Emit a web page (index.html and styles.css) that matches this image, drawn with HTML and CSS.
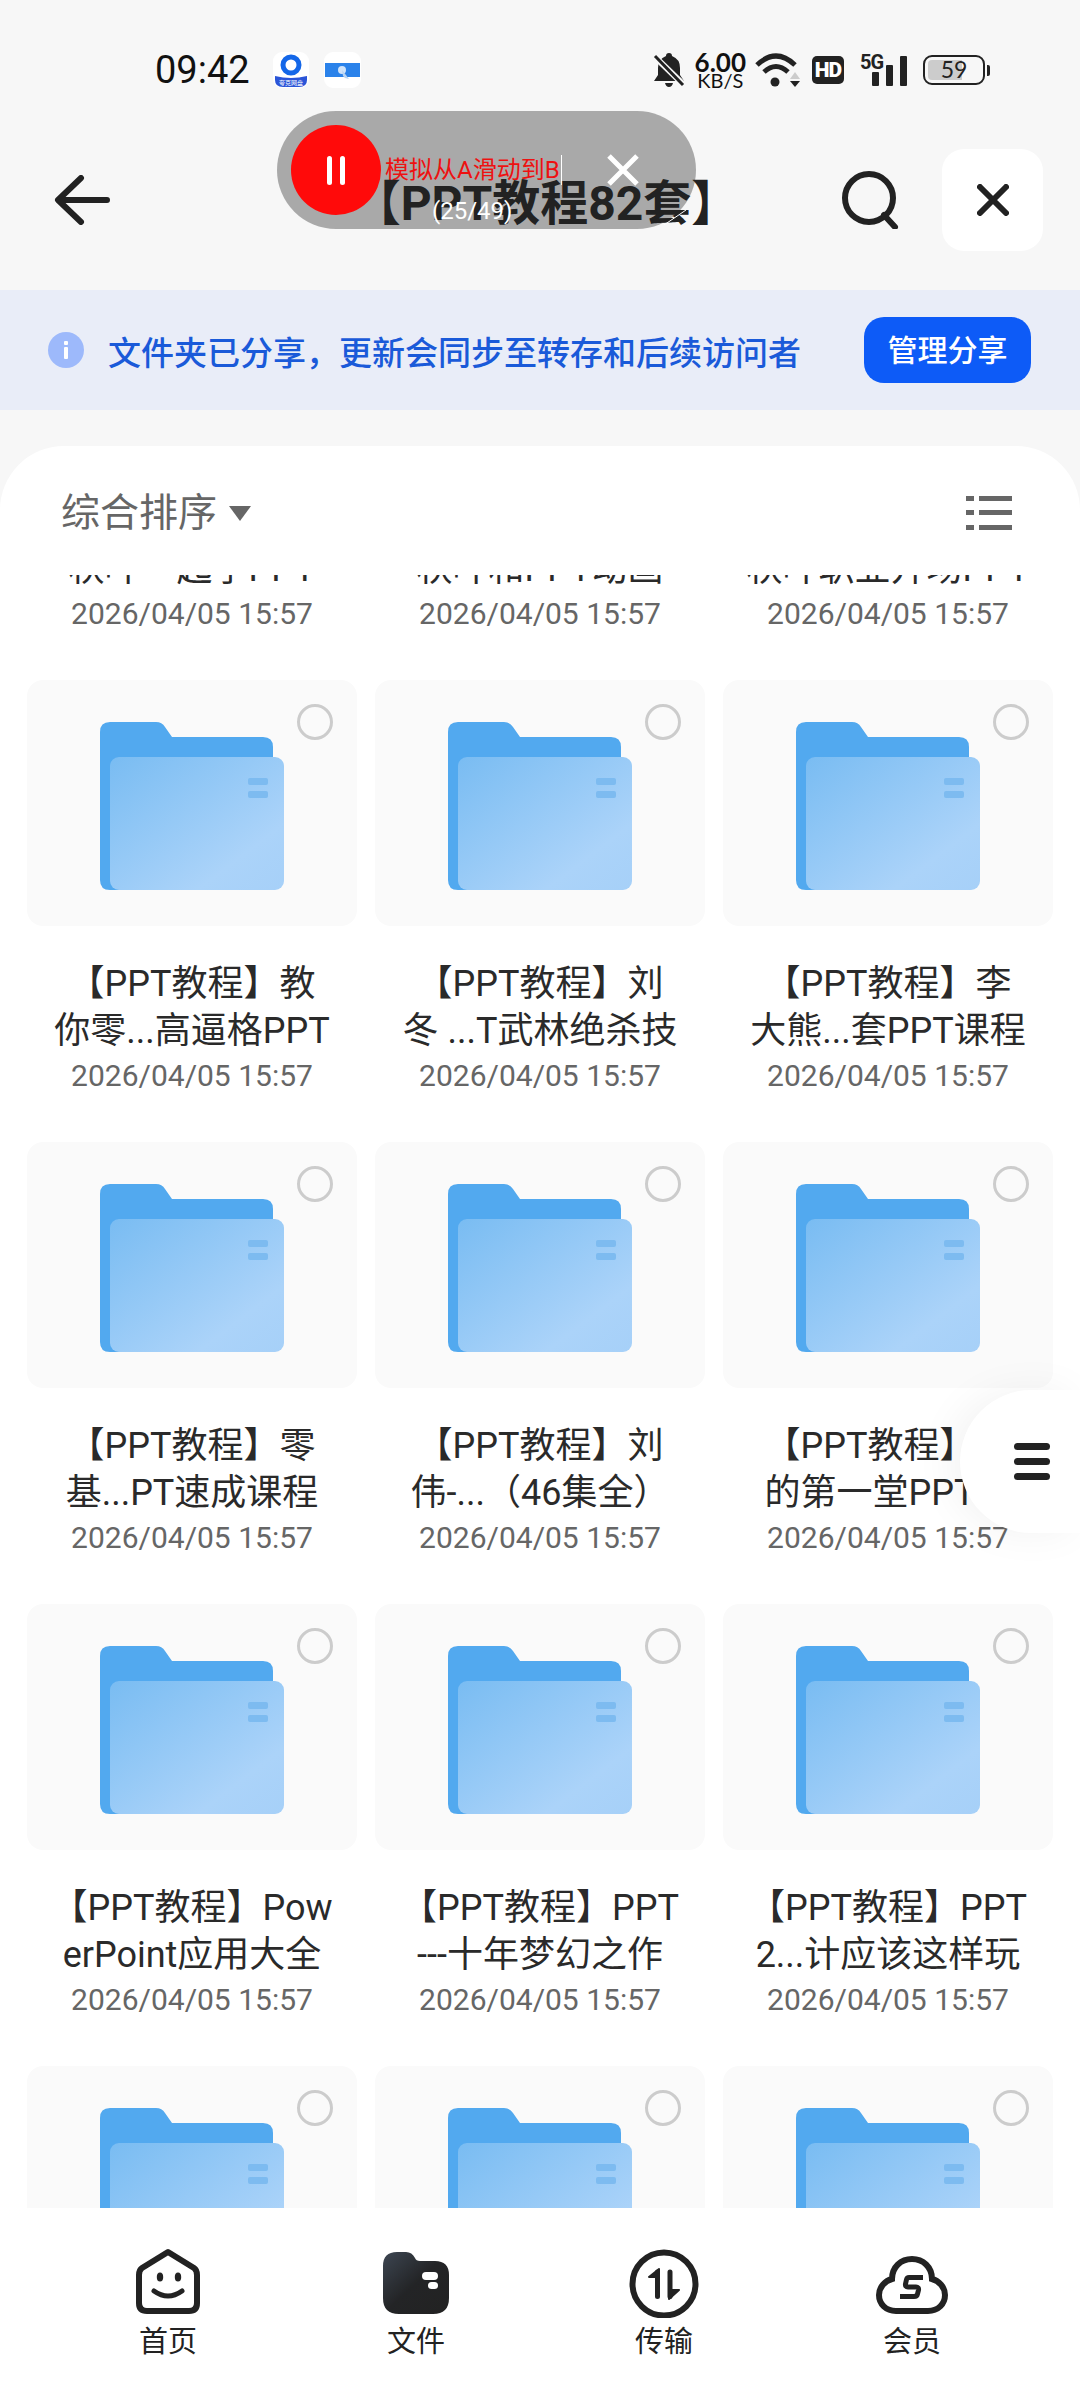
FILE: index.html
```html
<!DOCTYPE html>
<html lang="zh-CN">
<head>
    <meta charset="UTF-8">
    <meta name="viewport" content="width=device-width, initial-scale=1.0">
    <title>【PPT教程82套】</title>
    <link rel="stylesheet" href="styles.css">
</head>
<body>
    <svg class="defs" width="0" height="0">
        <defs>
            <linearGradient id="front-grad" x1="0" y1="0" x2="1" y2="1">
                <stop offset="0" stop-color="#79bcf2"/>
                <stop offset="0.75" stop-color="#abd3f9"/>
                <stop offset="1" stop-color="#a6d0f8"/>
            </linearGradient>
            <linearGradient id="file-grad" x1="0" y1="0" x2="1" y2="1">
                <stop offset="0" stop-color="#3d4652"/>
                <stop offset="0.5" stop-color="#232426"/>
                <stop offset="1" stop-color="#222"/>
            </linearGradient>
            <symbol id="folder" viewBox="0 0 184 168">
                <path d="M0 10 Q0 0 10 0 H56 Q62 0 65 5 L72 15 H163 Q173 15 173 25 V168 H10 Q0 168 0 158 Z" fill="#52a9ef"/>
                <rect x="10" y="35" width="174" height="133" rx="9" fill="url(#front-grad)"/>
                <rect x="148" y="56" width="20" height="7" rx="2" fill="#7dbbf0"/>
                <rect x="148" y="69" width="20" height="7" rx="2" fill="#7dbbf0"/>
            </symbol>
        </defs>
    </svg>

    <div class="status-bar">
        <div class="status-left">
            <span class="clock">09:42</span>
            <svg class="notify" width="36" height="36" viewBox="0 0 36 36">
                <rect width="36" height="36" rx="9" fill="#fff"/>
                <circle cx="18" cy="13" r="8" fill="none" stroke="#1467e8" stroke-width="5"/>
                <path d="M2 24 Q18 28 34 24 V28 Q34 35 26 35 H10 Q2 35 2 28 Z" fill="#2b55d8"/>
                <text x="18" y="33" class="notify-text">夸克网盘</text>
            </svg>
            <svg class="notify" width="37" height="36" viewBox="0 0 37 36">
                <rect width="37" height="36" rx="9" fill="#fff"/>
                <rect x="1" y="11" width="35" height="14" fill="#2a82ea"/>
                <circle cx="18" cy="18" r="4" fill="#cfe3fa"/>
                <path d="M18 18 L25 27 L21 26 L19 24 Z" fill="#b8d4f3"/>
            </svg>
        </div>
        <div class="status-right">
            <svg width="32" height="36" viewBox="0 0 32 36">
                <path d="M16 1 Q19 1 19 4 Q27 7 27 16 V23 L31 29 H1 L5 23 V16 Q5 7 13 4 Q13 1 16 1 Z M12 31 H20 Q19 35 16 35 Q13 35 12 31 Z" fill="#222"/>
                <path d="M1 4 L31 33" stroke="#f7f7f7" stroke-width="6"/>
                <path d="M2 4 L30 33" stroke="#222" stroke-width="3"/>
            </svg>
            <div class="speed">
                <span class="speed-num">6.00</span>
                <span class="speed-unit">KB/S</span>
            </div>
            <svg width="46" height="36" viewBox="0 0 46 36">
                <path d="M2 13 Q21 -5 40 13" fill="none" stroke="#222" stroke-width="5"/>
                <path d="M9 20 Q21 9 33 20" fill="none" stroke="#222" stroke-width="5"/>
                <circle cx="20" cy="30" r="4.5" fill="#222"/>
                <path d="M35 27 L40 20 L45 27 Z" fill="#ccc"/>
                <path d="M35 29 L45 29 L40 35 Z" fill="#222"/>
            </svg>
            <span class="hd">HD</span>
            <div class="signal">
                <span class="five-g">5G</span>
                <i class="bar bar-1"></i>
                <i class="bar bar-2"></i>
                <i class="bar bar-3"></i>
            </div>
            <div class="battery">
                <div class="battery-fill"></div>
                <span class="battery-num">59</span>
            </div>
        </div>
    </div>

    <div class="top-bar">
        <svg class="back" width="56" height="50" viewBox="0 0 56 50">
            <path d="M27 3 L4 25 L27 47 M5 25 H53" fill="none" stroke="#222" stroke-width="6" stroke-linecap="round" stroke-linejoin="round"/>
        </svg>
        <h1 class="page-title">【PPT教程82套】</h1>
        <svg class="search" width="60" height="58" viewBox="0 0 60 58">
            <circle cx="29" cy="27" r="24" fill="none" stroke="#222" stroke-width="6"/>
            <path d="M44 44 L55 56" stroke="#222" stroke-width="6" stroke-linecap="round"/>
        </svg>
        <div class="close-box">
            <svg width="32" height="32" viewBox="0 0 32 32">
                <path d="M3 3 L29 29 M29 3 L3 29" stroke="#222" stroke-width="6" stroke-linecap="round"/>
            </svg>
        </div>
    </div>

    <div class="share-banner">
        <svg class="info" width="36" height="36" viewBox="0 0 36 36">
            <circle cx="18" cy="18" r="18" fill="#9db9fb"/>
            <rect x="16" y="9" width="4" height="4" rx="1" fill="#fff"/>
            <rect x="16" y="15" width="4" height="12" rx="1" fill="#fff"/>
        </svg>
        <span class="banner-text">文件夹已分享，更新会同步至转存和后续访问者</span>
        <button class="manage-btn">管理分享</button>
    </div>

    <div class="sheet">
        <div class="sheet-head">
            <div class="sort">
                <span>综合排序</span>
                <i class="sort-arrow"></i>
            </div>
            <svg width="46" height="36" viewBox="0 0 46 36">
                <g fill="#666">
                    <rect x="0" y="1" width="8" height="5"/>
                    <rect x="13" y="1" width="33" height="5"/>
                    <rect x="0" y="15" width="8" height="5"/>
                    <rect x="13" y="15" width="33" height="5"/>
                    <rect x="0" y="30" width="8" height="5"/>
                    <rect x="13" y="30" width="33" height="5"/>
                </g>
            </svg>
        </div>

        <div class="scroll-area">
            <div class="file-grid">
                <div class="item">
                    <div class="card"><i class="radio"></i><svg class="folder"><use href="#folder"/></svg></div>
                    <div class="name"><span>【PPT教程】秋</span><span>秋叶一起学PPT</span></div>
                    <div class="date">2026/04/05 15:57</div>
                </div>
                <div class="item">
                    <div class="card"><i class="radio"></i><svg class="folder"><use href="#folder"/></svg></div>
                    <div class="name"><span>【PPT教程】秋</span><span>秋叶和PPT动画</span></div>
                    <div class="date">2026/04/05 15:57</div>
                </div>
                <div class="item">
                    <div class="card"><i class="radio"></i><svg class="folder"><use href="#folder"/></svg></div>
                    <div class="name"><span>【PPT教程】秋</span><span>秋叶职业开场PPT</span></div>
                    <div class="date">2026/04/05 15:57</div>
                </div>

                <div class="item">
                    <div class="card"><i class="radio"></i><svg class="folder"><use href="#folder"/></svg></div>
                    <div class="name"><span>【PPT教程】教</span><span>你零...高逼格PPT</span></div>
                    <div class="date">2026/04/05 15:57</div>
                </div>
                <div class="item">
                    <div class="card"><i class="radio"></i><svg class="folder"><use href="#folder"/></svg></div>
                    <div class="name"><span>【PPT教程】刘</span><span>冬 ...T武林绝杀技</span></div>
                    <div class="date">2026/04/05 15:57</div>
                </div>
                <div class="item">
                    <div class="card"><i class="radio"></i><svg class="folder"><use href="#folder"/></svg></div>
                    <div class="name"><span>【PPT教程】李</span><span>大熊...套PPT课程</span></div>
                    <div class="date">2026/04/05 15:57</div>
                </div>

                <div class="item">
                    <div class="card"><i class="radio"></i><svg class="folder"><use href="#folder"/></svg></div>
                    <div class="name"><span>【PPT教程】零</span><span>基...PT速成课程</span></div>
                    <div class="date">2026/04/05 15:57</div>
                </div>
                <div class="item">
                    <div class="card"><i class="radio"></i><svg class="folder"><use href="#folder"/></svg></div>
                    <div class="name"><span>【PPT教程】刘</span><span>伟-...（46集全）</span></div>
                    <div class="date">2026/04/05 15:57</div>
                </div>
                <div class="item">
                    <div class="card"><i class="radio"></i><svg class="folder"><use href="#folder"/></svg></div>
                    <div class="name"><span>【PPT教程】你</span><span>的第一堂PPT课</span></div>
                    <div class="date">2026/04/05 15:57</div>
                </div>

                <div class="item">
                    <div class="card"><i class="radio"></i><svg class="folder"><use href="#folder"/></svg></div>
                    <div class="name"><span>【PPT教程】Pow</span><span>erPoint应用大全</span></div>
                    <div class="date">2026/04/05 15:57</div>
                </div>
                <div class="item">
                    <div class="card"><i class="radio"></i><svg class="folder"><use href="#folder"/></svg></div>
                    <div class="name"><span>【PPT教程】PPT</span><span>---十年梦幻之作</span></div>
                    <div class="date">2026/04/05 15:57</div>
                </div>
                <div class="item">
                    <div class="card"><i class="radio"></i><svg class="folder"><use href="#folder"/></svg></div>
                    <div class="name"><span>【PPT教程】PPT</span><span>2...计应该这样玩</span></div>
                    <div class="date">2026/04/05 15:57</div>
                </div>

                <div class="item">
                    <div class="card"><i class="radio"></i><svg class="folder"><use href="#folder"/></svg></div>
                </div>
                <div class="item">
                    <div class="card"><i class="radio"></i><svg class="folder"><use href="#folder"/></svg></div>
                </div>
                <div class="item">
                    <div class="card"><i class="radio"></i><svg class="folder"><use href="#folder"/></svg></div>
                </div>
            </div>
        </div>
    </div>

    <div class="tab-bar">
        <div class="tab">
            <svg width="72" height="72" viewBox="0 0 72 72">
                <path d="M36 6 L62 22 Q65 24 65 29 V57 Q65 65 57 65 H15 Q7 65 7 57 V29 Q7 24 10 22 Z" fill="none" stroke="#222" stroke-width="6" stroke-linejoin="round"/>
                <ellipse cx="28" cy="31" rx="3.2" ry="4.5" fill="#222"/>
                <ellipse cx="46" cy="31" rx="3.2" ry="4.5" fill="#222"/>
                <path d="M22 45 Q36 55 50 45" fill="none" stroke="#222" stroke-width="5" stroke-linecap="round"/>
            </svg>
            <span>首页</span>
        </div>
        <div class="tab">
            <svg width="72" height="72" viewBox="0 0 72 72">
                <path d="M3 20 Q3 6 17 6 H26 Q32 6 35 12 Q36 15 40 15 H55 Q69 15 69 29 V52 Q69 68 53 68 H19 Q3 68 3 52 Z" fill="url(#file-grad)"/>
                <rect x="42" y="26" width="16" height="8" rx="4" fill="#fff"/>
                <rect x="48" y="36" width="10" height="7" rx="3.5" fill="#fff"/>
            </svg>
            <span>文件</span>
        </div>
        <div class="tab">
            <svg width="72" height="72" viewBox="0 0 72 72">
                <circle cx="36" cy="38" r="31.5" fill="none" stroke="#222" stroke-width="6"/>
                <path d="M29.5 26 V50.5 M42 26 V50.5" stroke="#222" stroke-width="5" stroke-linecap="round"/>
                <path d="M31 23 L21 31 L31 31 Z M41 53 L51 44 L41 44 Z" fill="#222" stroke="#222" stroke-width="2" stroke-linejoin="round"/>
            </svg>
            <span>传输</span>
        </div>
        <div class="tab">
            <svg width="72" height="72" viewBox="0 0 72 72">
                <path d="M20 65 H52 C62 65 69 58 69 49 C69 41 63 35 56 33 C56 21 47 13 36 13 C25 13 16 21 16 33 C9 35 3 41 3 49 C3 58 10 65 20 65 Z" fill="none" stroke="#222" stroke-width="6"/>
                <path d="M47 31.5 H33 Q31 31.5 30.5 33.5 L29.5 38 Q29 41 32 41 H40 Q43 41 42.5 44 L41.5 48 Q41 50.5 38 50.5 H24" fill="none" stroke="#222" stroke-width="5"/>
            </svg>
            <span>会员</span>
        </div>
    </div>

    <!-- recorder overlay, sits across the title -->
    <div class="recorder">
        <div class="rec-btn"><i></i><i></i></div>
        <span class="rec-text">模拟从A滑动到B</span>
        <i class="rec-cursor"></i>
        <svg class="rec-close" width="32" height="32" viewBox="0 0 32 32">
            <path d="M2 2 L30 30 M30 2 L2 30" stroke="#fff" stroke-width="5"/>
        </svg>
    </div>
    <span class="rec-count">(25/49)</span>
    <svg class="rec-stroke" width="24" height="18" viewBox="0 0 24 18">
        <path d="M1 17 L23 2" stroke="#fff" stroke-width="1" fill="none"/>
    </svg>

    <div class="edge-btn">
        <i></i><i></i><i></i>
    </div>
</body>
</html>
```

FILE: styles.css
```css
* {
    box-sizing: border-box;
}

html, body {
    margin: 0;
    padding: 0;
}

body {
    position: relative;
    width: 1080px;
    height: 2400px;
    overflow: hidden;
    display: flex;
    flex-direction: column;
    background-color: #f7f7f7;
    color: #222;
    font-family: Roboto, "Noto Sans CJK SC", sans-serif;
}

.defs {
    position: absolute;
}

/* status bar */
.status-bar {
    height: 140px;
    flex: none;
    display: flex;
    justify-content: space-between;
    align-items: center;
    padding: 0 95px 0 155px;
}

.status-left {
    display: flex;
    align-items: center;
}

.clock {
    font-size: 38px;
    color: #111;
    margin-right: 23px;
}

.notify {
    margin-right: 15px;
}

.notify-text {
    font-size: 6px;
    fill: #fff;
    text-anchor: middle;
}

.status-right {
    display: flex;
    align-items: center;
}

.speed {
    display: flex;
    flex-direction: column;
    align-items: center;
    margin: 0 9px 0 10px;
    font-family: Lato, sans-serif;
}

.speed-num {
    font-size: 26px;
    line-height: 20px;
    font-weight: 700;
    color: #111;
}

.speed-unit {
    font-size: 20px;
    line-height: 17px;
    color: #111;
}

.hd {
    width: 32px;
    height: 28px;
    margin-left: 11px;
    background-color: #222;
    border-radius: 5px;
    color: #fff;
    font-size: 21px;
    font-weight: 900;
    line-height: 28px;
    text-align: center;
    letter-spacing: -1px;
}

.signal {
    position: relative;
    width: 44px;
    height: 36px;
    margin-left: 19px;
    display: flex;
    align-items: flex-end;
    justify-content: flex-end;
    gap: 7px;
    padding-bottom: 2px;
}

.five-g {
    position: absolute;
    left: -3px;
    top: 0;
    font-size: 20px;
    line-height: 20px;
    font-weight: 700;
    letter-spacing: -1px;
}

.bar {
    display: block;
    width: 7px;
    background-color: #222;
    border-radius: 1px;
}

.bar-1 {
    height: 14px;
}

.bar-2 {
    height: 21px;
}

.bar-3 {
    height: 30px;
}

.battery {
    position: relative;
    width: 62px;
    height: 30px;
    margin-left: 16px;
    border: 2.5px solid #222;
    border-radius: 9px;
    text-align: center;
}

.battery::after {
    content: "";
    position: absolute;
    right: -7px;
    top: 8px;
    width: 3px;
    height: 11px;
    background-color: #222;
    border-radius: 0 2px 2px 0;
}

.battery-fill {
    position: absolute;
    left: 3px;
    top: 3px;
    bottom: 3px;
    width: 34px;
    background-color: #ccc;
    border-radius: 4px 0 0 4px;
}

.battery-num {
    position: relative;
    font-family: Lato, sans-serif;
    font-size: 23px;
    line-height: 25px;
    display: block;
    color: #222;
}

/* title row */
.top-bar {
    position: relative;
    z-index: 2;
    height: 120px;
    flex: none;
    display: flex;
    align-items: center;
    padding: 0 37px 0 54px;
}

.page-title {
    flex: 1;
    margin: 0;
    padding-left: 142px;
    padding-top: 8px;
    font-size: 48px;
    font-weight: 700;
    line-height: 50px;
    text-align: center;
    white-space: nowrap;
    color: #222;
}

.search {
    margin-right: 42px;
}

.close-box {
    width: 101px;
    height: 102px;
    display: flex;
    align-items: center;
    justify-content: center;
    background-color: #fff;
    border-radius: 22px;
}

/* banner */
.share-banner {
    height: 120px;
    flex: none;
    margin-top: 30px;
    display: flex;
    align-items: center;
    padding: 0 49px 0 48px;
    background-color: #e9edf8;
}

.info {
    flex: none;
}

.banner-text {
    flex: 1;
    margin-left: 24px;
    padding-top: 2px;
    font-size: 33px;
    font-weight: 500;
    color: #1a5ad9;
    white-space: nowrap;
}

.manage-btn {
    width: 167px;
    height: 66px;
    padding: 0 0 5px;
    border: none;
    border-radius: 20px;
    background-color: #0d5bf7;
    color: #fff;
    font-family: inherit;
    font-size: 30px;
    font-weight: 500;
}

/* file sheet */
.sheet {
    flex: 1;
    min-height: 0;
    margin-top: 36px;
    display: flex;
    flex-direction: column;
    background-color: #fff;
    border-radius: 64px 64px 0 0;
    overflow: hidden;
}

.sheet-head {
    height: 129px;
    flex: none;
    display: flex;
    justify-content: space-between;
    align-items: flex-start;
    padding: 49px 68px 0 61px;
}

.sort {
    display: flex;
    align-items: center;
    margin-top: -2px;
    font-size: 39px;
    line-height: 40px;
    color: #666;
}

.sort-arrow {
    width: 0;
    height: 0;
    margin-left: 12px;
    border-left: 11px solid transparent;
    border-right: 11px solid transparent;
    border-top: 15px solid #666;
}

.scroll-area {
    flex: 1;
    min-height: 0;
    overflow: hidden;
}

.file-grid {
    margin-top: -357px;
    display: grid;
    grid-template-columns: repeat(3, 330px);
    column-gap: 18px;
    row-gap: 49px;
    padding: 0 27px;
}

.item {
    height: 413px;
}

.card {
    position: relative;
    height: 246px;
    padding-top: 42px;
    display: flex;
    justify-content: center;
    align-items: flex-start;
    background-color: #fafafa;
    border-radius: 16px;
}

.folder {
    width: 184px;
    height: 168px;
}

.radio {
    position: absolute;
    top: 24px;
    right: 24px;
    width: 36px;
    height: 36px;
    border: 3.5px solid #ccc;
    border-radius: 50%;
}

.name {
    margin-top: 35px;
    font-size: 36px;
    line-height: 47px;
    text-align: center;
    color: #2a2a2a;
}

.name span {
    display: block;
    white-space: nowrap;
}

.date {
    margin-top: 1px;
    font-size: 30px;
    line-height: 40px;
    text-align: center;
    color: #666;
    white-space: nowrap;
}

/* tabs */
.tab-bar {
    height: 192px;
    flex: none;
    display: grid;
    grid-template-columns: repeat(4, 248px);
    padding: 38px 44px 0;
    background-color: #fff;
}

.tab {
    display: flex;
    flex-direction: column;
    align-items: center;
    font-size: 29px;
    line-height: 34px;
    color: #222;
}

.tab span {
    margin-top: 7px;
}

/* recorder overlay */
.recorder {
    position: absolute;
    left: 277px;
    top: 111px;
    z-index: 1;
    width: 419px;
    height: 118px;
    display: flex;
    align-items: center;
    padding-left: 14px;
    background-color: #a9a9a9;
    border-radius: 59px;
}

.rec-btn {
    width: 90px;
    height: 90px;
    flex: none;
    display: flex;
    align-items: center;
    justify-content: center;
    gap: 8px;
    background-color: #ff0a0a;
    border-radius: 50%;
}

.rec-btn i {
    display: block;
    width: 5px;
    height: 29px;
    background-color: #fff;
    border-radius: 3px;
}

.rec-text {
    margin-left: 4px;
    font-size: 24px;
    line-height: 30px;
    color: #ee1111;
    white-space: nowrap;
}

.rec-cursor {
    width: 1px;
    height: 30px;
    margin-left: 1px;
    background-color: #fff;
}

.rec-close {
    margin-left: 45px;
}

.rec-count {
    position: absolute;
    left: 432px;
    top: 196px;
    z-index: 3;
    font-size: 24px;
    line-height: 30px;
    color: #fff;
}

.rec-stroke {
    position: absolute;
    left: 663px;
    top: 208px;
    z-index: 3;
}

.edge-btn {
    position: absolute;
    right: 0;
    top: 1390px;
    width: 120px;
    height: 143px;
    display: flex;
    flex-direction: column;
    justify-content: center;
    gap: 8px;
    padding-left: 54px;
    background-color: #fff;
    border-radius: 72px 0 0 72px;
    box-shadow: -10px 0 40px rgba(0, 0, 0, 0.05);
}

.edge-btn i {
    display: block;
    width: 36px;
    height: 7px;
    background-color: #222;
    border-radius: 4px;
}
```
